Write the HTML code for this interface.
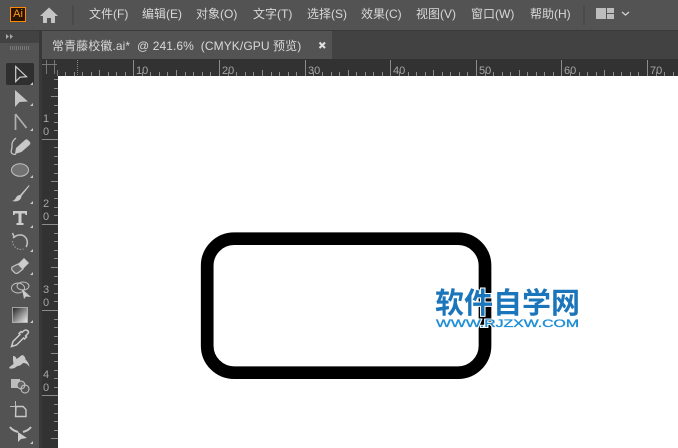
<!DOCTYPE html>
<html><head><meta charset="utf-8"><style>
html,body{margin:0;padding:0;background:#535353}
body{width:678px;height:448px;overflow:hidden;position:relative;font-family:"Liberation Sans","Noto Sans CJK SC",sans-serif}
.a{position:absolute;white-space:pre}
.m{top:6px;font-size:12px;line-height:16px;color:#d8d8d8}
svg{position:absolute;left:0;top:0}
</style></head><body>
<div class="a" style="left:0;top:30px;width:678px;height:1px;background:#3a3a3a"></div>
<div class="a" style="left:40px;top:31px;width:638px;height:28px;background:#424242"></div>
<div class="a" style="left:42px;top:31px;width:290px;height:28px;background:#535353"></div>
<div class="a" style="left:0;top:31px;width:40px;height:12px;background:#424242"></div>
<div class="a" style="left:0;top:43px;width:40px;height:405px;background:#535353"></div>
<div class="a" style="left:39px;top:31px;width:3px;height:417px;background:#383838"></div>
<div class="a" style="left:42px;top:59px;width:636px;height:17px;background:#323232"></div>
<div class="a" style="left:42px;top:59px;width:16px;height:389px;background:#323232"></div>
<div class="a" style="left:58px;top:76px;width:620px;height:372px;background:#fff"></div>

<div class="a" style="left:10px;top:7px;width:14px;height:13px;border:1px solid #ff8c00;background:#2b1500"></div>
<div class="a" style="left:10px;top:7px;width:16px;height:15px;line-height:15px;text-align:center;font-size:11px;font-weight:400;color:#ff9a1a">Ai</div>
<div class="a m" style="left:89px">文件(F)</div>
<div class="a m" style="left:142px">编辑(E)</div>
<div class="a m" style="left:196px">对象(O)</div>
<div class="a m" style="left:253px">文字(T)</div>
<div class="a m" style="left:307px">选择(S)</div>
<div class="a m" style="left:361px">效果(C)</div>
<div class="a m" style="left:416px">视图(V)</div>
<div class="a m" style="left:471px">窗口(W)</div>
<div class="a m" style="left:530px">帮助(H)</div>
<div class="a" style="left:52px;top:38px;font-size:12px;line-height:16px;letter-spacing:.09px;color:#d8d8d8">常青藤校徽.ai*  @ 241.6%  (CMYK/GPU 预览)</div>

<svg width="678" height="448" viewBox="0 0 678 448">
<path d="M49 7.500 L40 16 L43 16 L43 23 L47 23 L47 18 L51 18 L51 23 L55 23 L55 16 L58 16 Z" fill="#c4c4c4"/>
<rect x="72" y="5" width="2" height="20" fill="#4a4a4a"/>
<rect x="583" y="5" width="2" height="20" fill="#4a4a4a"/>
<path d="M596 8h10v11h-10zM607 8h7v5h-7zM607 14h7v5h-7z" fill="#bdbdbd"/>
<path d="M622 12l3.500 3 3.500-3" fill="none" stroke="#d0d0d0" stroke-width="1.300"/>
<path d="M6 34l3 2.500-3 2.500zM10 34l3 2.500-3 2.500z" fill="#a8a8a8"/>
<path d="M319.500 42.500l5.500 5.500M325 42.500l-5.500 5.500" stroke="#e0e0e0" stroke-width="2"/>
<path d="M10.500 46v4M12.500 46v4M14.500 46v4M16.500 46v4M18.500 46v4M20.500 46v4M22.500 46v4M24.500 46v4M26.500 46v4M28.500 46v4" stroke="#777" stroke-width="1"/>

<!-- ruler -->
<g fill="none" stroke="#8c8c8c" stroke-width="1">
<path d="M42 64.500h15M46.500 60v14M54.500 60v14M57.500 70v6" stroke="#777"/>
<path d="M77.500 60v16" stroke="#888" stroke-dasharray="1 1"/>
<path d="M133.500 60v16M219.500 60v16M305.500 60v16M390.500 60v16M476.500 60v16M561.500 60v16M647.500 60v16"/>
<path d="M65.500 72v4M74.500 72v4M82.500 72v4M91.500 72v4M99.500 70v6M108.500 72v4M116.500 72v4M125.500 72v4M142.500 72v4M150.500 72v4M159.500 72v4M167.500 72v4M176.500 70v6M185.500 72v4M193.500 72v4M202.500 72v4M210.500 72v4M228.500 72v4M236.500 72v4M245.500 72v4M253.500 72v4M262.500 70v6M271.500 72v4M279.500 72v4M288.500 72v4M296.500 72v4M313.500 72v4M322.500 72v4M331.500 72v4M339.500 72v4M348.500 70v6M356.500 72v4M365.500 72v4M373.500 72v4M382.500 72v4M399.500 72v4M408.500 72v4M416.500 72v4M425.500 72v4M433.500 70v6M442.500 72v4M450.500 72v4M459.500 72v4M467.500 72v4M485.500 72v4M493.500 72v4M502.500 72v4M510.500 72v4M519.500 70v6M527.500 72v4M536.500 72v4M544.500 72v4M553.500 72v4M570.500 72v4M579.500 72v4M587.500 72v4M596.500 72v4M604.500 70v6M613.500 72v4M621.500 72v4M630.500 72v4M638.500 72v4M656.500 72v4M664.500 72v4M673.500 72v4"/>
<path d="M54 79.500h4M54 88.500h4M51 96.500h7M54 105.500h4M54 113.500h4M54 122.500h4M54 130.500h4M54 147.500h4M54 156.500h4M54 164.500h4M54 173.500h4M51 181.500h7M54 190.500h4M54 198.500h4M54 207.500h4M54 215.500h4M54 233.500h4M54 241.500h4M54 250.500h4M54 258.500h4M51 267.500h7M54 276.500h4M54 284.500h4M54 293.500h4M54 301.500h4M54 319.500h4M54 327.500h4M54 336.500h4M54 344.500h4M51 353.500h7M54 361.500h4M54 370.500h4M54 378.500h4M54 387.500h4M54 404.500h4M54 413.500h4M54 421.500h4M54 430.500h4M51 438.500h7"/>
<path d="M42 139.500h16M42 224.500h16M42 310.500h16M42 395.500h16"/>
</g>
<g font-family="Liberation Sans" font-size="11" fill="#a6a6a6">
<text x="136" y="74">10</text><text x="222" y="74">20</text><text x="308" y="74">30</text><text x="393" y="74">40</text><text x="479" y="74">50</text><text x="564" y="74">60</text><text x="650" y="74">70</text>
<text x="43" y="122">1</text><text x="43" y="135">0</text>
<text x="43" y="207">2</text><text x="43" y="220">0</text>
<text x="43" y="293">3</text><text x="43" y="306">0</text>
<text x="43" y="378">4</text><text x="43" y="391">0</text>
</g>

<!-- tools -->
<rect x="6" y="63" width="28" height="22" rx="2" fill="#2f2f2f"/>
<path d="M15.700 66.500v15l4.300-4.300 6.500-.5z" fill="none" stroke="#d0d0d0" stroke-width="1.200"/>
<path d="M15 90v17l4.500-5 8.500-.5z" fill="#c4c4c4"/>
<path d="M15.500 114v16M15.500 114l11 14" fill="none" stroke="#b0b0b0" stroke-width="1.700"/>
<path d="M16 148l9-8c1-1 2-1 3 0l2 2c.5 1 .5 2-.5 3l-8 7-6.500 2z" fill="#c8c8c8"/>
<path d="M16 138c-5 4-4 7-4 9s-2 5 0 6.500 4 .5 4 .5" fill="none" stroke="#c4c4c4" stroke-width="1.300"/>
<ellipse cx="20" cy="170" rx="8.500" ry="6.300" fill="#727272" stroke="#c0c0c0" stroke-width="1"/>
<path d="M29 185l-9 10c-2 0-3 1-4 2.500-.5 1.500-2 3-4 3.500 4 1 8 0 9-3 .5-1 .5-1.500.5-2l8-10z" fill="#c8c8c8"/>
<path d="M13 211h14v4h-1.500l-.5-1.500h-3.500v9.500h2v2h-7v-2h2v-9.500h-3.500l-.5 1.500H13z" fill="#cccccc"/>
<path d="M12.500 233l2 5M13 238c3-3 8-4 11-2 4 3 4 8 2 11" fill="none" stroke="#bdbdbd" stroke-width="1.600"/>
<path d="M12.500 241c0 5 5 10 11 8" fill="none" stroke="#999" stroke-width="1.200" stroke-dasharray="1.500 1.500"/>
<path d="M18 264l6-6 5 5-6 6z" fill="#cccccc"/>
<path d="M12 267l6-3 5 5-5 4c-1 .5-2 .5-3 0l-3-3c-.5-1-.5-2 0-3z" fill="#666" stroke="#c8c8c8" stroke-width="1.200"/>
<ellipse cx="18" cy="288" rx="6.500" ry="5" fill="none" stroke="#bdbdbd"/>
<ellipse cx="23" cy="286" rx="6" ry="4" fill="none" stroke="#bdbdbd"/>
<path d="M22 289l9 8-5-.5-2 2.500z" fill="#cccccc"/>
<defs><linearGradient id="g" x1="1" y1="1" x2="0" y2="0"><stop offset="0" stop-color="#f0f0f0"/><stop offset="1" stop-color="#222"/></linearGradient></defs>
<rect x="12.500" y="307.500" width="15" height="15" fill="url(#g)" stroke="#bbb" stroke-width=".8"/>
<path d="M28 331c-2-1.500-3-1-4.500 0l-1.500 1.500-1-1-2 2 1 1-7 7-1.500 5 5-1.500 7-7 1 1 2-2-1-1 1.500-1.500c1-1 2-2.500 1-3.500z" fill="none" stroke="#cccccc" stroke-width="1.500"/>
<path d="M13 356c2 0 3 1 3.500 3l3-2c1-1 3-3 4.500-1 2 2 1 3 2 4s3 3 3.500 7c-2-3-4-4-6-4-2 1-3 3-6 3l-3 2c-3 1-6 1-5-1l4-3-.5-4z" fill="#c8c8c8"/>
<rect x="11" y="379" width="9" height="9" fill="#bdbdbd"/>
<circle cx="21" cy="385" r="4" fill="#666" stroke="#c8c8c8"/>
<circle cx="25" cy="389" r="4" fill="none" stroke="#c8c8c8"/>
<path d="M15.500 401v10M10 406.500h10" stroke="#bbb" stroke-width="1"/>
<path d="M16 406.500h7l3 3v7H15.500z" fill="#555" stroke="#c8c8c8" stroke-width="1.400"/>
<path d="M10 427c2 3 5 4 8 5M31 427c-2 3-5 4-8 5" fill="none" stroke="#c8c8c8" stroke-width="2"/>
<path d="M18 432v10l3-3 6-1z" fill="#cccccc"/>
<path d="M33 85v-3l-3 3zM33 106v-3l-3 3zM33 131v-3l-3 3zM33 178v-3l-3 3zM33 204v-3l-3 3zM33 228v-3l-3 3zM33 252v-3l-3 3zM33 275v-3l-3 3zM33 323v-3l-3 3zM33 444v-3l-3 3z" fill="#c8c8c8"/>

<!-- artwork -->
<rect x="207.200" y="238.700" width="277.800" height="134" rx="27" fill="none" stroke="#000" stroke-width="12.700"/>
<g font-family="Liberation Sans,Noto Sans CJK SC,sans-serif" font-size="29" font-weight="700">
<text x="435" y="313" fill="#1b75bb" stroke="#fff" stroke-width="2" textLength="145" lengthAdjust="spacing">软件自学网</text>
<text x="435" y="313" fill="#1b75bb" textLength="145" lengthAdjust="spacing">软件自学网</text>
</g>
<g font-family="Liberation Sans,sans-serif" font-size="11">
<text x="436" y="327" fill="#fff" stroke="#fff" stroke-width="2" textLength="143" lengthAdjust="spacingAndGlyphs">WWW.RJZXW.COM</text>
<text x="436" y="327" fill="#1f8fd6" stroke="#1f8fd6" stroke-width=".35" textLength="143" lengthAdjust="spacingAndGlyphs">WWW.RJZXW.COM</text>
</g>
</svg>
</body></html>
